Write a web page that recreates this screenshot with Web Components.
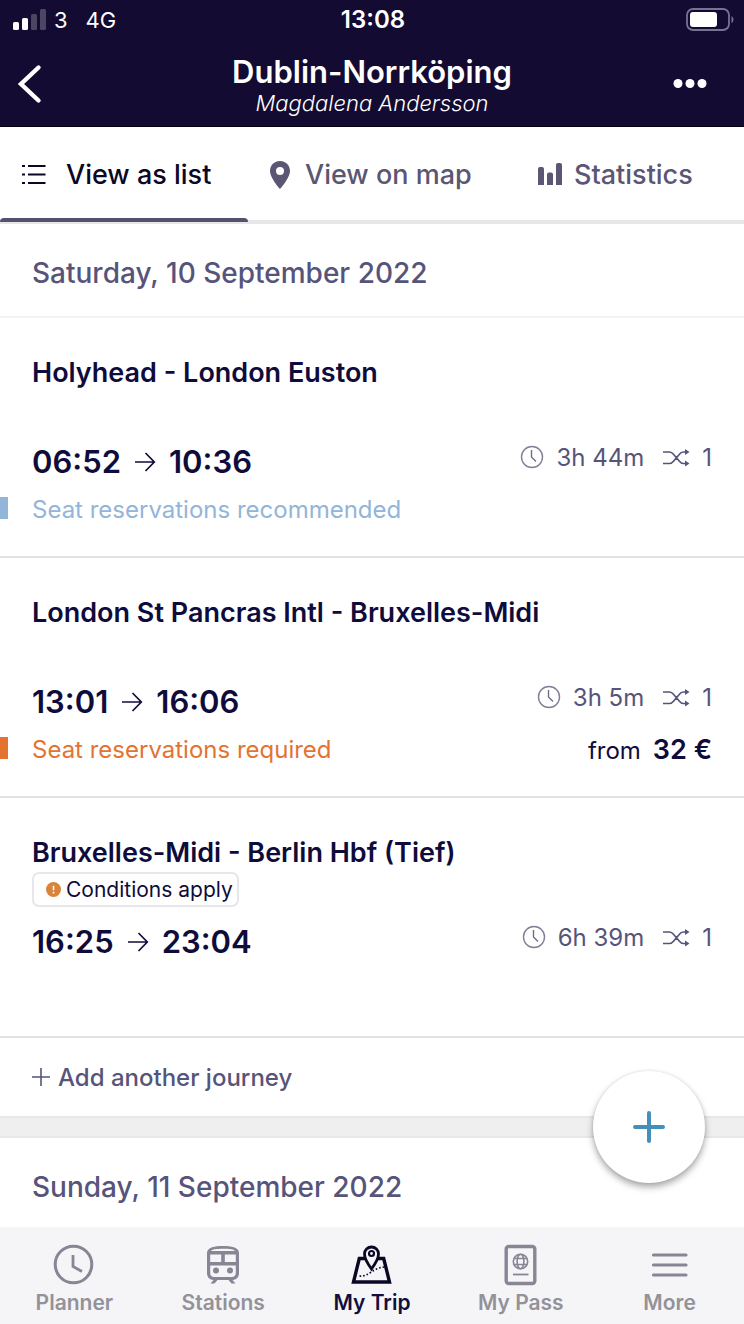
<!DOCTYPE html>
<html lang="en">
<head>
<meta charset="utf-8">
<meta name="viewport" content="width=device-width, initial-scale=1">
<title>Dublin-Norrköping</title>
<style>
  body {
    margin: 0;
    font-family: Inter, "Liberation Sans", sans-serif;
    color: #0f0c3b;
    background: #fff;
  }
</style>
</head>
<body>
<trip-app>
  <status-bar slot="top" carrier="3" network="4G" time="13:08"></status-bar>
  <trip-header slot="top">
    Dublin-Norrköping
    <span slot="owner">Magdalena Andersson</span>
  </trip-header>
  <view-tabs slot="top">
    <view-tab icon="list" active>View as list</view-tab>
    <view-tab icon="pin">View on map</view-tab>
    <view-tab icon="bars">Statistics</view-tab>
  </view-tabs>

  <day-heading>Saturday, 10 September 2022</day-heading>
  <journey-leg departs="06:52" arrives="10:36" duration="3h 44m" changes="1" level="recommended">
    Holyhead - London Euston
    <span slot="note">Seat reservations recommended</span>
  </journey-leg>
  <journey-leg departs="13:01" arrives="16:06" duration="3h 5m" changes="1" level="required" price="32 €">
    London St Pancras Intl - Bruxelles-Midi
    <span slot="note">Seat reservations required</span>
  </journey-leg>
  <journey-leg departs="16:25" arrives="23:04" duration="6h 39m" changes="1">
    Bruxelles-Midi - Berlin Hbf (Tief)
    <condition-badge slot="badge">Conditions apply</condition-badge>
  </journey-leg>
  <add-journey>Add another journey</add-journey>
  <day-heading>Sunday, 11 September 2022</day-heading>

  <fab-button slot="fab" label="Add"></fab-button>
  <nav-bar slot="bottom">
    <nav-item icon="clock">Planner</nav-item>
    <nav-item icon="train">Stations</nav-item>
    <nav-item icon="trip" active>My Trip</nav-item>
    <nav-item icon="pass">My Pass</nav-item>
    <nav-item icon="menu">More</nav-item>
  </nav-bar>
</trip-app>

<script>
const ICONS = {
  signal: [34, 22, `<g fill="#fff"><rect x="1" y="13" width="6" height="8" rx="1.5"/><rect x="10" y="9" width="6" height="12" rx="1.5"/><g opacity=".24"><rect x="19" y="5" width="6" height="16" rx="1.5"/><rect x="28" y="0" width="6" height="21" rx="1.5"/></g></g>`],
  battery: [48, 24, `<rect x="1" y="1" width="42" height="21" rx="6" fill="none" stroke="#787390" stroke-width="1.8"/><rect x="4" y="4" width="27" height="15" rx="3" fill="#fff"/><path d="M45.500 8v7q2-1 2-3.500t-2-3.500z" fill="#787390"/>`],
  back: [24, 40, `<path d="M22.500 4.500 5 21 22.500 37.500" fill="none" stroke="#fff" stroke-width="4.400" stroke-linecap="round"/>`],
  dots: [34, 10, `<g fill="#fff"><circle cx="5" cy="5.500" r="4.500"/><circle cx="17" cy="5.500" r="4.500"/><circle cx="29" cy="5.500" r="4.500"/></g>`],
  list: [24, 22, `<path d="M6 2h17.500M6 10.500h17.500M6 19h17.500M0 2h3M0 10.500h3M0 19h3" stroke="currentColor" stroke-width="2.200"/>`],
  pin: [20, 28, `<path fill="currentColor" fill-rule="evenodd" d="M10 0C4.400 0 0 4.300 0 10c0 7 10 18 10 18s10-11 10-18C20 4.300 15.600 0 10 0zm0 6a4 4 0 1 1 0 8 4 4 0 0 1 0-8z"/>`],
  bars: [24, 24, `<path fill="currentColor" d="M0 22V6q0-2 2-2h2q2 0 2 2v16zM9 22V11.500q0-2 2-2h2q2 0 2 2V22zM18 22V2q0-2 2-2h2q2 0 2 2v20z"/>`],
  arrow: [22, 20, `<path d="M1 10h19M11.500 1l8.800 9-8.800 9" fill="none" stroke="currentColor" stroke-width="1.700"/>`],
  time: [24, 26, `<circle cx="12" cy="12" r="10.500" fill="none" stroke="#807e98" stroke-width="1.400"/><path d="M11.500 5v7l4.500 4.500" fill="none" stroke="#6f6d8c" stroke-width="1.400"/>`],
  shuffle: [28, 18, `<path d="M1 3h6.500c2 0 3 1 4.200 2.500l5.500 6.500c1.200 1.500 2.200 2.500 4 2.500H25M1 14.500h6.500c2 0 3-1 4.200-2.500l5.500-6.500c1.200-1.500 2.200-2.500 4-2.500H25" fill="none" stroke="currentColor" stroke-width="1.700"/><path d="M23 0v6l4.500-3zM23 11.500v6l4.500-3z" fill="currentColor"/>`],
  alert: [16, 18, `<circle cx="7.500" cy="8.500" r="7.500" fill="#d9833b"/><path d="M7.500 4.700v4.600M7.500 10.800v1.700" stroke="#fff" stroke-width="1.600"/>`],
  plus: [18, 20, `<path d="M9 0v18M0 9h18" stroke="currentColor" stroke-width="1.600"/>`],
  fab: [32, 32, `<path d="M16 2v28M2 16h28" stroke="#4390b9" stroke-width="4" stroke-linecap="round"/>`],
  clock: [40, 40, `<circle cx="19.500" cy="19.500" r="18.300" fill="none" stroke="currentColor" stroke-width="3"/><path d="M19 10v11.500l9 5" fill="none" stroke="currentColor" stroke-width="2.800"/>`],
  train: [40, 40, `<path fill="currentColor" fill-rule="evenodd" d="M20 1c8 0 16 1 16 7v20c0 4-2.500 7-6.500 7l3 3.500h-4L25.500 35h-11l-3 3.500h-4l3-3.500C6.500 35 4 32 4 28V8c0-6 8-7 16-7zM20 3.800c-7 0-11 .7-12 2.200h24c-1-1.500-5-2.200-12-2.200zM7.200 9.500V17h11V9.500zm14.600 0V17h11V9.500zM7.200 20.500V28c0 2.500 1.500 4 4 4h17.600c2.500 0 4-1.500 4-4v-7.500z"/><circle cx="13" cy="25.500" r="3" fill="currentColor"/><circle cx="27" cy="25.500" r="3" fill="currentColor"/>`],
  trip: [40, 40, `<path d="M7.300 13.500h24.400L37.500 37h-36z" fill="none" stroke="currentColor" stroke-width="3.400"/><path d="M19.500 24C15.500 18.500 12.500 14 12.500 9a7 7 0 0 1 14 0c0 5-3 9.500-7 15z" fill="#f5f5f8" stroke="currentColor" stroke-width="2.800"/><circle cx="19.500" cy="8.500" r="2.500" fill="none" stroke="currentColor" stroke-width="2.200"/><path d="M7.500 31c10 1 12-8 25-9" fill="none" stroke="currentColor" stroke-width="1.600" stroke-dasharray="1.600 2"/>`],
  pass: [40, 40, `<rect x="5.200" y="1.500" width="28.600" height="37" rx="2.500" fill="none" stroke="currentColor" stroke-width="3.400"/><g fill="none" stroke="currentColor" stroke-width="1.600"><circle cx="19.500" cy="16.500" r="7.200"/><ellipse cx="19.500" cy="16.500" rx="3.400" ry="7.200"/><path d="M13.200 13.500h12.600M13.200 19.500h12.600"/><path d="M12 29.500h15.500" stroke-width="1.800"/></g>`],
  menu: [40, 40, `<path d="M3.500 10h32.500M3.500 20h32.500M3.500 30h32.500" stroke="currentColor" stroke-width="3.200" stroke-linecap="round"/>`]
};

const icon = name => {
  const [w, h, body] = ICONS[name];
  return `<svg class="icon" aria-hidden="true" width="${w}" height="${h}" viewBox="0 0 ${w} ${h}">${body}</svg>`;
};

const define = (name, render) => customElements.define(name, class extends HTMLElement {
  constructor() {
    super();
    this.attachShadow({ mode: "open" });
  }
  connectedCallback() {
    const template = document.createElement("template");
    template.innerHTML = render(this);
    this.shadowRoot.replaceChildren(template.content.cloneNode(true));
  }
});

const BASE = `
  *, :host { box-sizing: border-box; }
  .icon { display: block; flex: none; overflow: visible; }
  button { font: inherit; color: inherit; background: none; border: 0; margin: 0; padding: 0; }
`;

define("trip-app", () => `
  <style>${BASE}
    :host { display: flex; flex-direction: column; height: 100vh; }
    .middle { position: relative; flex: 1; min-height: 0; display: flex; }
    main { flex: 1; overflow-y: auto; scrollbar-width: none; }
    .fab { position: absolute; right: 39px; bottom: 44px; }
  </style>
  <slot name="top"></slot>
  <div class="middle">
    <main><slot></slot></main>
    <div class="fab"><slot name="fab"></slot></div>
  </div>
  <slot name="bottom"></slot>`);

define("status-bar", el => `
  <style>${BASE}
    :host { display: grid; grid-template-columns: 1fr auto 1fr; align-items: center; height: 40px;
      padding: 0 10px 0 12px; background: #130b31; color: #fff; font-size: 22px; line-height: 24px; }
    .left { display: flex; align-items: center; gap: 8px; }
    .network { padding-left: 10px; }
    .time { font-size: 24px; font-weight: 600; }
    .right { justify-self: end; }
  </style>
  <div class="left">${icon("signal")}<span>${el.getAttribute("carrier")}</span><span class="network">${el.getAttribute("network")}</span></div>
  <div class="time">${el.getAttribute("time")}</div>
  <div class="right">${icon("battery")}</div>`);

define("trip-header", () => `
  <style>${BASE}
    :host { display: grid; grid-template-columns: 48px 1fr 48px; align-items: center; padding: 12px 30px 12px 16px;
      background: #130b31; color: #fff; border-bottom: 1px solid #05030f; }
    button { height: 44px; display: flex; align-items: center; }
    .more { justify-content: center; }
    .titles { text-align: center; padding-left: 14px; }
    h1 { margin: 0; font-size: 31px; line-height: 40px; font-weight: 600; }
    p { margin: 0; font-size: 22px; line-height: 22px; font-weight: 300; font-style: italic; }
  </style>
  <button aria-label="Back">${icon("back")}</button>
  <div class="titles"><h1><slot></slot></h1><p><slot name="owner"></slot></p></div>
  <button class="more" aria-label="More options">${icon("dots")}</button>`);

define("view-tabs", () => `
  <style>${BASE}
    :host { display: grid; grid-template-columns: repeat(3, 1fr); border-bottom: 4px solid #e7e7ea; }
  </style>
  <slot></slot>`);

define("view-tab", el => `
  <style>${BASE}
    :host { display: block; position: relative; color: #5a5673; }
    :host([active]) { color: #0b0726; }
    button { display: flex; align-items: center; width: 100%; padding: 28px 0 25px 22px; gap: 15px;
      font-size: 27px; line-height: 40px; font-weight: 500; white-space: nowrap; }
    :host([icon="list"]) button { gap: 20px; }
    :host([icon="bars"]) button { padding-left: 42px; gap: 12px; }
    :host([active])::after { content: ""; position: absolute; left: 0; right: 0; bottom: -2px; height: 4px;
      background: #55506c; border-radius: 4px 4px 0 0; }
  </style>
  <button>${icon(el.getAttribute("icon"))}<span><slot></slot></span></button>`);

define("day-heading", () => `
  <style>${BASE}
    :host { display: block; padding: 33px 32px 27px; border-bottom: 2px solid #f3f3f5; }
    h2 { margin: 0; font-size: 28px; line-height: 32px; font-weight: 500; color: #56547a; }
  </style>
  <h2><slot></slot></h2>`);

define("journey-leg", el => {
  const get = name => el.getAttribute(name);
  return `
  <style>${BASE}
    :host { display: block; padding: 39px 32px 30px 0; border-bottom: 2px solid #e2e2e5; --level: transparent; }
    :host([level="recommended"]) { --level: #92b5d9; }
    :host([level="required"]) { --level: #e47332; }
    h3, .badge, .times { margin: 0 0 0 32px; }
    h3 { font-size: 27px; line-height: 32px; font-weight: 600; }
    .badge { height: 53px; padding-top: 3px; }
    .row { display: flex; justify-content: space-between; align-items: flex-start; }
    .times { display: flex; align-items: center; gap: 13px; font-size: 31px; line-height: 40px; font-weight: 600; }
    .meta { display: flex; align-items: center; gap: 12px; font-size: 24px; line-height: 32px; color: #56547a; }
    .meta .changes { display: flex; align-items: center; gap: 12px; padding-left: 6px; }
    .note { display: flex; align-items: center; gap: 24px; margin-top: 12px; font-size: 24px; line-height: 32px; height: 32px; color: var(--level); }
    .note::before { content: ""; width: 8px; height: 22px; margin-bottom: 4px; background: var(--level); }
    .price { margin-left: auto; display: flex; align-items: baseline; gap: 12px; color: #0f0c3b; }
    .price strong { font-size: 27px; font-weight: 600; }
  </style>
  <h3><slot></slot></h3>
  <div class="badge"><slot name="badge"></slot></div>
  <div class="row">
    <div class="times"><time>${get("departs")}</time>${icon("arrow")}<time>${get("arrives")}</time></div>
    <div class="meta">${icon("time")}<span>${get("duration")}</span><span class="changes">${icon("shuffle")}<span>${get("changes")}</span></span></div>
  </div>
  <div class="note"><slot name="note"></slot>${get("price") ? `<span class="price"><span>from</span><strong>${get("price")}</strong></span>` : ""}</div>`;
});

define("condition-badge", () => `
  <style>${BASE}
    :host { display: inline-flex; align-items: center; gap: 4px; height: 35px; padding: 0 4px 0 12px;
      border: 2px solid #e7e7eb; border-radius: 7px; font-size: 21px; line-height: 24px; vertical-align: top; }
  </style>
  ${icon("alert")}<span><slot></slot></span>`);

define("add-journey", () => `
  <style>${BASE}
    :host { display: block; }
    button { display: flex; align-items: center; gap: 8px; padding: 24px 32px 22px; width: 100%;
      font-size: 24px; line-height: 32px; font-weight: 500; color: #56547a; }
    :host::after { content: ""; display: block; box-sizing: border-box; height: 22px; background: #efeff0;
      border: solid #e8e8ea; border-width: 2px 0; }
  </style>
  <button>${icon("plus")}<span><slot></slot></span></button>`);

define("fab-button", el => `
  <style>${BASE}
    :host { display: block; }
    button { display: grid; place-items: center; width: 112px; height: 112px; border-radius: 50%; background: #fff;
      box-shadow: 0 4px 7px rgba(0, 0, 0, .34), 0 0 3px rgba(0, 0, 0, .1); }
  </style>
  <button aria-label="${el.getAttribute("label")}">${icon("fab")}</button>`);

define("nav-bar", () => `
  <style>${BASE}
    :host { display: block; background: #f5f5f8; }
    nav { display: grid; grid-template-columns: repeat(5, 1fr); padding: 18px 0 9px; }
  </style>
  <nav><slot></slot></nav>`);

define("nav-item", el => `
  <style>${BASE}
    :host { display: block; color: #888594; --text: #929298; }
    :host([active]) { color: #0a0624; --text: #130f3d; }
    a { display: flex; flex-direction: column; align-items: center; gap: 6px; color: inherit; text-decoration: none;
      font-size: 21px; line-height: 24px; font-weight: 600; }
    span { color: var(--text); }
  </style>
  <a href="#">${icon(el.getAttribute("icon"))}<span><slot></slot></span></a>`);
</script>
</body>
</html>
